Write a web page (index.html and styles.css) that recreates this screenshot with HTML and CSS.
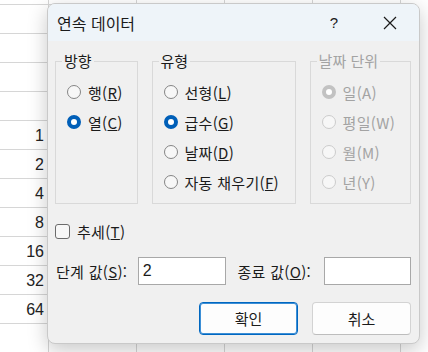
FILE: index.html
```html
<!DOCTYPE html>
<html lang="ko">

<head>
    <meta charset="UTF-8">
    <meta name="viewport" content="width=device-width, initial-scale=1.0">
    <title>연속 데이터</title>
    <link rel="stylesheet" href="styles.css">
</head>

<body>

    <div class="sheet">
        <div class="row"><div class="cell num"></div><div class="cell"></div><div class="cell"></div><div class="cell"></div><div class="cell"></div></div>
        <div class="row"><div class="cell num"></div><div class="cell"></div><div class="cell"></div><div class="cell"></div><div class="cell"></div></div>
        <div class="row"><div class="cell num"></div><div class="cell"></div><div class="cell"></div><div class="cell"></div><div class="cell"></div></div>
        <div class="row"><div class="cell num"></div><div class="cell"></div><div class="cell"></div><div class="cell"></div><div class="cell"></div></div>
        <div class="row"><div class="cell num"></div><div class="cell"></div><div class="cell"></div><div class="cell"></div><div class="cell"></div></div>
        <div class="row"><div class="cell num">1</div><div class="cell"></div><div class="cell"></div><div class="cell"></div><div class="cell"></div></div>
        <div class="row"><div class="cell num">2</div><div class="cell"></div><div class="cell"></div><div class="cell"></div><div class="cell"></div></div>
        <div class="row"><div class="cell num">4</div><div class="cell"></div><div class="cell"></div><div class="cell"></div><div class="cell"></div></div>
        <div class="row"><div class="cell num">8</div><div class="cell"></div><div class="cell"></div><div class="cell"></div><div class="cell"></div></div>
        <div class="row"><div class="cell num">16</div><div class="cell"></div><div class="cell"></div><div class="cell"></div><div class="cell"></div></div>
        <div class="row"><div class="cell num">32</div><div class="cell"></div><div class="cell"></div><div class="cell"></div><div class="cell"></div></div>
        <div class="row"><div class="cell num">64</div><div class="cell"></div><div class="cell"></div><div class="cell"></div><div class="cell"></div></div>
        <div class="row"><div class="cell num"></div><div class="cell"></div><div class="cell"></div><div class="cell"></div><div class="cell"></div></div>
    </div>

    <div class="dialog">
        <div class="titlebar">
            <span class="title">연속 데이터</span>
            <span class="help">?</span>
            <span class="close">
                <svg width="14" height="14" viewBox="0 0 14 14"><path d="M1 1L13 13M13 1L1 13" stroke="#1a1a1a" stroke-width="1.2" fill="none"/></svg>
            </span>
        </div>

        <div class="dialog-body">
            <div class="groups">
                <fieldset class="group group-dir">
                    <legend>방향</legend>
                    <div class="option"><span class="radio"></span>행(<u>R</u>)</div>
                    <div class="option"><span class="radio checked"></span>열(<u>C</u>)</div>
                </fieldset>

                <fieldset class="group group-type">
                    <legend>유형</legend>
                    <div class="option"><span class="radio"></span>선형(<u>L</u>)</div>
                    <div class="option"><span class="radio checked"></span>급수(<u>G</u>)</div>
                    <div class="option"><span class="radio"></span>날짜(<u>D</u>)</div>
                    <div class="option"><span class="radio"></span>자동 채우기(<u>F</u>)</div>
                </fieldset>

                <fieldset class="group group-date disabled">
                    <legend>날짜 단위</legend>
                    <div class="option"><span class="radio checked"></span>일(A)</div>
                    <div class="option"><span class="radio"></span>평일(W)</div>
                    <div class="option"><span class="radio"></span>월(M)</div>
                    <div class="option"><span class="radio"></span>년(Y)</div>
                </fieldset>
            </div>

            <div class="option trend"><span class="checkbox"></span>추세(<u>T</u>)</div>

            <div class="values">
                <span class="value-label step-label">단계 값(<u>S</u>):</span>
                <div class="textbox step">2</div>
                <span class="value-label stop-label">종료 값(<u>O</u>):</span>
                <div class="textbox stop"></div>
            </div>

            <div class="buttons">
                <button type="button" class="btn btn-ok">확인</button>
                <button type="button" class="btn">취소</button>
            </div>
        </div>
    </div>

</body>

</html>
```

FILE: styles.css
```css
body {
    margin: 0;
    padding: 0;
    background-color: #ffffff;
    font-family: 'Noto Sans CJK KR', 'Noto Sans', sans-serif;
    color: #1b1b1b;
    overflow: hidden;
}

/* spreadsheet behind the dialog */
.sheet {
    margin-top: -24px;
    width: 428px;
    overflow: hidden;
}

.row {
    display: flex;
    height: 29px;
}

.cell {
    box-sizing: border-box;
    width: 88px;
    height: 29px;
    border-right: 1px solid #d6d6d6;
    border-bottom: 1px solid #d6d6d6;
    flex-shrink: 0;
}

.cell.num {
    width: 49px;
    padding-right: 4px;
    text-align: right;
    font-family: 'Liberation Sans', Arial, sans-serif;
    font-size: 16px;
    line-height: 29px;
    color: #222222;
}

/* dialog */
.dialog {
    position: absolute;
    left: 47px;
    top: 3px;
    width: 373px;
    height: 341px;
    box-sizing: border-box;
    background-color: #f0f0f0;
    border: 1px solid #c9c9c9;
    border-radius: 8px;
    box-shadow: 0 6px 20px rgba(0, 0, 0, 0.22);
    overflow: hidden;
}

.titlebar {
    display: flex;
    align-items: center;
    height: 37px;
    background-color: #eef4f9;
    padding-left: 9px;
}

.title {
    flex: 1;
    font-size: 16px;
}

.help {
    width: 46px;
    text-align: center;
    font-family: 'Liberation Sans', Arial, sans-serif;
    font-size: 15px;
    margin-right: 10px;
}

.close {
    width: 46px;
    display: flex;
    justify-content: center;
    margin-right: 6px;
}

.dialog-body {
    padding: 10px 8px 0 7px;
    font-size: 15px;
}

.groups {
    display: flex;
    gap: 14px;
}

.group {
    margin: 0;
    padding: 0 0 0 11px;
    border: 1px solid #d9d9d9;
    height: 153px;
    box-sizing: border-box;
}

.group legend {
    padding: 0 2px;
    margin-left: -5px;
    font-size: 15px;
    line-height: 20px;
}

.group-dir {
    width: 83px;
}

.group-type {
    width: 145px;
}

.group-date {
    width: 102px;
}

.groups .option:first-of-type {
    margin-top: 6px;
}

.option {
    display: flex;
    align-items: center;
    height: 30px;
    white-space: nowrap;
    letter-spacing: 0.3px;
}

.disabled,
.disabled legend {
    color: #a3a3a3;
}

.radio {
    box-sizing: border-box;
    width: 14px;
    height: 14px;
    border-radius: 50%;
    border: 1px solid #858585;
    background-color: #f7f7f7;
    margin-right: 7px;
    flex-shrink: 0;
}

.radio.checked {
    border: 4px solid #005fb8;
    background-color: #ffffff;
}

.disabled .radio {
    border-color: #cccccc;
    background-color: #f7f7f7;
}

.disabled .radio.checked {
    border: 4px solid #c2c2c2;
    background-color: #ffffff;
}

.trend {
    margin-top: 12px;
}

.checkbox {
    box-sizing: border-box;
    width: 15px;
    height: 15px;
    border: 1px solid #6b6b6b;
    border-radius: 3px;
    background-color: #f7f7f7;
    margin-right: 7px;
}

.values {
    display: flex;
    align-items: center;
    margin-top: 11px;
}

.value-label {
    white-space: nowrap;
    letter-spacing: 0.3px;
}

.step-label {
    width: 82px;
    padding-left: 1px;
}

.textbox {
    box-sizing: border-box;
    height: 28px;
    background-color: #ffffff;
    border: 1px solid #a8a8a8;
    padding: 0 4px;
    line-height: 26px;
    font-family: 'Liberation Sans', Arial, sans-serif;
    font-size: 16px;
}

.step {
    width: 88px;
}

.stop-label {
    width: 87px;
    margin-left: 12px;
}

.stop {
    width: 87px;
}

.buttons {
    display: flex;
    justify-content: flex-end;
    gap: 14px;
    margin-top: 17px;
    padding-right: 0;
}

.btn {
    box-sizing: border-box;
    width: 99px;
    height: 33px;
    background-color: #fdfdfd;
    border: 1px solid #d3d3d3;
    border-bottom-color: #bdbdbd;
    border-radius: 4px;
    font-family: 'Noto Sans CJK KR', 'Noto Sans', sans-serif;
    font-size: 15px;
    color: #1b1b1b;
    padding: 0;
}

.btn-ok {
    border: 1px solid #0067c0;
    box-shadow: inset 0 0 0 1px #3d8fd6;
}
```
